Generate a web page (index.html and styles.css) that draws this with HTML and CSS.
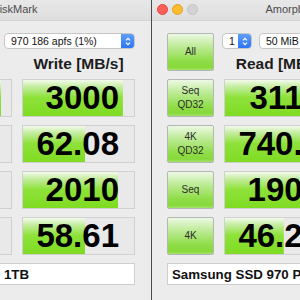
FILE: index.html
```html
<!DOCTYPE html>
<html lang="en">
<head>
<meta charset="utf-8">
<title>AmorphousDiskMark</title>
<link rel="stylesheet" href="styles.css">
</head>
<body>
<div class="desktop">

    <div class="window window-left">
        <div class="titlebar">
            <div class="lights">
                <span class="light light-red"></span>
                <span class="light light-yellow"></span>
                <span class="light light-off"></span>
            </div>
            <div class="title">AmorphousDiskMark</div>
        </div>
        <div class="panel">
            <div class="btn">All</div>
            <div class="top">
                <div class="selects">
                    <div class="select sel-count"><span class="val">1</span><span class="stepper"><svg width="8" height="11" viewBox="0 0 8 11"><path d="M2 4.3 4 2.3 6 4.3M2 6.7 4 8.7 6 6.7" fill="none" stroke="#fff" stroke-width="1.2"/></svg></span></div>
                    <div class="select sel-size"><span class="val">50 MiB</span><span class="stepper"><svg width="8" height="11" viewBox="0 0 8 11"><path d="M2 4.3 4 2.3 6 4.3M2 6.7 4 8.7 6 6.7" fill="none" stroke="#fff" stroke-width="1.2"/></svg></span></div>
                    <div class="select sel-disk"><span class="val">970 186 apfs (1%)</span><span class="stepper"><svg width="8" height="11" viewBox="0 0 8 11"><path d="M2 4.3 4 2.3 6 4.3M2 6.7 4 8.7 6 6.7" fill="none" stroke="#fff" stroke-width="1.2"/></svg></span></div>
                </div>
                <div class="heads">
                    <div class="head">Read [MB/s]</div>
                    <div class="head">Write [MB/s]</div>
                </div>
            </div>

            <div class="btn">Seq<br>QD32</div>
            <div class="meter" style="--fill: 91%">3297</div>
            <div class="meter" style="--fill: 90%">3000</div>

            <div class="btn">4K<br>QD32</div>
            <div class="meter" style="--fill: 70%">601.4</div>
            <div class="meter" style="--fill: 56%">62.08</div>

            <div class="btn">Seq</div>
            <div class="meter" style="--fill: 82%">1779</div>
            <div class="meter" style="--fill: 86%">2010</div>

            <div class="btn">4K</div>
            <div class="meter" style="--fill: 52%">44.87</div>
            <div class="meter" style="--fill: 56%">58.61</div>

            <div class="device">Samsung SSD 970 PRO 1TB</div>
        </div>
    </div>

    <div class="divider"></div>

    <div class="window window-right">
        <div class="titlebar">
            <div class="lights">
                <span class="light light-red"></span>
                <span class="light light-yellow"></span>
                <span class="light light-off"></span>
            </div>
            <div class="title">AmorphousDiskMark</div>
        </div>
        <div class="panel">
            <div class="btn">All</div>
            <div class="top">
                <div class="selects">
                    <div class="select sel-count"><span class="val">1</span><span class="stepper"><svg width="8" height="11" viewBox="0 0 8 11"><path d="M2 4.3 4 2.3 6 4.3M2 6.7 4 8.7 6 6.7" fill="none" stroke="#fff" stroke-width="1.2"/></svg></span></div>
                    <div class="select sel-size"><span class="val">50 MiB</span><span class="stepper"><svg width="8" height="11" viewBox="0 0 8 11"><path d="M2 4.3 4 2.3 6 4.3M2 6.7 4 8.7 6 6.7" fill="none" stroke="#fff" stroke-width="1.2"/></svg></span></div>
                    <div class="select sel-disk"><span class="val">970 186 apfs (1%)</span><span class="stepper"><svg width="8" height="11" viewBox="0 0 8 11"><path d="M2 4.3 4 2.3 6 4.3M2 6.7 4 8.7 6 6.7" fill="none" stroke="#fff" stroke-width="1.2"/></svg></span></div>
                </div>
                <div class="heads">
                    <div class="head">Read [MB/s]</div>
                    <div class="head">Write [MB/s]</div>
                </div>
            </div>

            <div class="btn">Seq<br>QD32</div>
            <div class="meter" style="--fill: 96%">3113</div>
            <div class="meter" style="--fill: 90%">3002</div>

            <div class="btn">4K<br>QD32</div>
            <div class="meter" style="--fill: 80%">740.5</div>
            <div class="meter" style="--fill: 60%">71.26</div>

            <div class="btn">Seq</div>
            <div class="meter" style="--fill: 84%">1905</div>
            <div class="meter" style="--fill: 86%">2012</div>

            <div class="btn">4K</div>
            <div class="meter" style="--fill: 53%">46.23</div>
            <div class="meter" style="--fill: 56%">59.04</div>

            <div class="device">Samsung SSD 970 PRO 1TB</div>
        </div>
    </div>

</div>
</body>
</html>
```

FILE: styles.css
```css
@charset "utf-8";

* {
    margin: 0;
    padding: 0;
    box-sizing: border-box;
}

html, body {
    width: 300px;
    height: 300px;
    overflow: hidden;
}

body {
    background: #2e2e2e;
    font-family: "Liberation Sans", Arial, sans-serif;
    color: #111;
}

.desktop {
    display: flex;
    width: 300px;
    height: 300px;
    overflow: hidden;
}

.window {
    flex: none;
    width: 329px;
    height: 300px;
    background: #ececec;
    display: flex;
    flex-direction: column;
}

.window-left {
    margin-left: -178px;
}

.divider {
    flex: none;
    width: 1px;
    background: #4b4b4b;
}

/* title bar */

.titlebar {
    height: 21px;
    padding: 4px 5px 0;
    background: linear-gradient(#e8e8e8, #dedede);
    border-bottom: 1px solid #d2d2d2;
    display: grid;
    grid-template-columns: 1fr auto 1fr;
    align-items: start;
}

.lights {
    display: flex;
    gap: 4px;
}

.light {
    width: 11px;
    height: 11px;
    border-radius: 50%;
}

.light-red {
    background: #fc5f57;
    border: 1px solid #e2463f;
}

.light-yellow {
    background: #fdbc2e;
    border: 1px solid #e0a028;
}

.light-off {
    background: #d3d3d3;
    border: 1px solid #c4c4c4;
}

.title {
    font-size: 11px;
    line-height: 11px;
    color: #4d4d4d;
}

/* panel */

.panel {
    flex: 1;
    display: grid;
    grid-template-columns: 47px 113px 113px;
    grid-template-rows: repeat(5, 38px) 22px;
    gap: 8px 10px;
    padding: 12px 16px 0 15px;
    align-content: start;
}

.window-left .panel {
    justify-content: end;
}

.window-right .panel {
    justify-content: start;
}

.btn {
    border: 1px solid #b6b6b6;
    border-radius: 2px;
    background: linear-gradient(#edf9e4, #bdeb96 35%, #8fdd48 75%, #86d93a 92%, #a2e36a);
    display: flex;
    align-items: center;
    justify-content: center;
    text-align: center;
    font-size: 10px;
    line-height: 14px;
    color: #2c2c2c;
}

.top {
    grid-column: 2 / 4;
    display: flex;
    flex-direction: column;
    justify-content: space-between;
}

.selects {
    display: flex;
    gap: 7px;
    margin-left: -2px;
}

.select {
    height: 16px;
    background: #fff;
    border: 1px solid #c6c6c6;
    border-radius: 4px;
    display: flex;
    align-items: center;
    font-size: 10.5px;
    white-space: nowrap;
    overflow: hidden;
}

.sel-count {
    width: 30px;
}

.sel-size {
    width: 63px;
}

.sel-disk {
    flex: 1;
}

.select .val {
    flex: 1;
    padding-left: 6px;
}

.stepper {
    width: 14px;
    height: 16px;
    margin-right: -1px;
    border-radius: 0 4px 4px 0;
    background: linear-gradient(#62a2fa, #2c72f2);
    display: flex;
    align-items: center;
    justify-content: center;
}

.heads {
    display: grid;
    grid-template-columns: 113px 113px;
    gap: 10px;
    margin-bottom: -1px;
}

.head {
    text-align: center;
    font-size: 15.5px;
    font-weight: bold;
    line-height: 16px;
    color: #1c1c1c;
}

.meter {
    border: 1px solid #d0d0d0;
    background-color: #e9e9e9;
    background-image: linear-gradient(#f3fbec, #c2ec9c 20%, #8ee23a 48%, #7fdb22);
    background-size: var(--fill) 100%;
    background-repeat: no-repeat;
    display: flex;
    align-items: center;
    justify-content: flex-end;
    padding-right: 15px;
    font-size: 33px;
    font-weight: bold;
    color: #000;
    white-space: nowrap;
}

.device {
    grid-column: 1 / 4;
    background: #fff;
    border: 1px solid #cfcfcf;
    padding-left: 4px;
    display: flex;
    align-items: center;
    font-size: 13.3px;
    font-weight: bold;
    white-space: nowrap;
    overflow: hidden;
}

.window-left .device {
    padding-left: 8px;
}
```
